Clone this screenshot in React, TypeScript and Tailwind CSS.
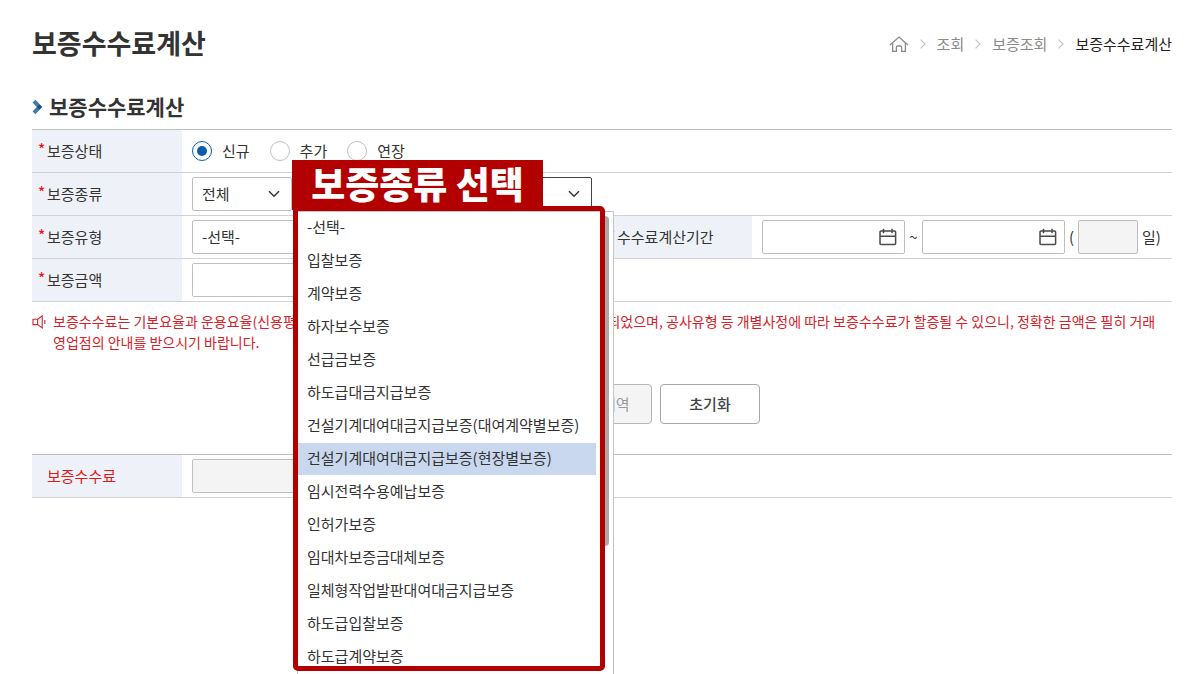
import { useState, type FC, type ReactNode } from 'react';
import { clsx } from 'clsx';

const STATUS_OPTIONS = ['신규', '추가', '연장'];

const GUARANTEE_TYPES = [
  '-선택-',
  '입찰보증',
  '계약보증',
  '하자보수보증',
  '선급금보증',
  '하도급대금지급보증',
  '건설기계대여대금지급보증(대여계약별보증)',
  '건설기계대여대금지급보증(현장별보증)',
  '임시전력수용예납보증',
  '인허가보증',
  '임대차보증금대체보증',
  '일체형작업발판대여대금지급보증',
  '하도급입찰보증',
  '하도급계약보증',
];

const fieldClass = 'h-[34px] rounded-xs border px-[9px] text-[15px] text-[#333]';
const fieldEnabled = 'border-[#bfbfbf] bg-white';
const fieldDisabled = 'border-[#bfbfbf] bg-[#f4f4f4]';

const HomeIcon: FC = () => (
  <svg width="20" height="18" viewBox="0 0 20 18" fill="none" stroke="#8a8a8a" strokeWidth="1.3" aria-hidden="true">
    <path d="M1 10 10 2l9 8" />
    <path d="M3.6 8v8.4h3.8v-4.2q0-1.2 1.2-1.2h2.8q1.2 0 1.2 1.2v4.2h3.8V8" />
  </svg>
);

const CrumbArrow: FC = () => (
  <svg width="6" height="10" viewBox="0 0 6 10" fill="none" stroke="#c4c4c4" strokeWidth="1.2" aria-hidden="true">
    <path d="m.6.6 4.4 4.4L.6 9.4" />
  </svg>
);

const TitleArrow: FC = () => (
  <svg width="10" height="16" viewBox="0 0 10 16" fill="none" aria-hidden="true">
    <path d="M2 2.2 7.4 8 2 13.8" stroke="#48789f" strokeWidth="4" />
    <path d="M7.4 5.4 10 8l-2.6 2.6L4.9 8z" fill="#144f7f" />
  </svg>
);

const SelectArrow: FC = () => (
  <svg
    className="pointer-events-none absolute right-3 top-1/2 -translate-y-1/2"
    width="12"
    height="8"
    viewBox="0 0 12 8"
    fill="none"
    stroke="#333"
    strokeWidth="1.5"
    aria-hidden="true"
  >
    <path d="m1 1.2 5 5 5-5" />
  </svg>
);

const CalendarIcon: FC = () => (
  <svg width="18" height="18" viewBox="0 0 18 18" fill="none" stroke="#4a4a4a" strokeWidth="1.5" aria-hidden="true">
    <rect x="1" y="3" width="15.6" height="13.6" rx="1" />
    <path d="M1 8.2h15.6M4.5.8v4.4M13.1.8v4.4" />
  </svg>
);

const SpeakerIcon: FC = () => (
  <svg width="14" height="14" viewBox="0 0 14 14" fill="none" stroke="#d4222a" strokeWidth="1.1" aria-hidden="true">
    <path d="M1 4.2h4.6v5.4H1zM5.6 4.2l4.6-3.3v12L5.6 9.6" />
    <path d="M12.8 5v4" />
  </svg>
);

interface FormRowProps {
  label: string;
  htmlFor?: string;
  required?: boolean;
  highlight?: boolean;
  children: ReactNode;
}

const FormRow: FC<FormRowProps> = ({ label, htmlFor, required = true, highlight, children }) => {
  const labelClass = clsx(highlight ? 'text-[#e01818]' : 'text-[#333]');
  return (
    <div className="flex h-[43px] border-b border-[#d0d2d5]">
      <div className="flex w-[150px] shrink-0 items-center bg-[#eef2f8] pl-1.5 text-[15px]">
        <span className="w-[9px] pb-1 font-medium text-[#e01818]">{required ? '*' : ''}</span>
        {htmlFor ? (
          <label htmlFor={htmlFor} className={labelClass}>
            {label}
          </label>
        ) : (
          <span className={labelClass}>{label}</span>
        )}
      </div>
      <div className="flex min-w-0 flex-1 items-center pl-2.5">{children}</div>
    </div>
  );
};

const DateField: FC<{ label: string }> = ({ label }) => (
  <div className="relative w-[143px]">
    <input type="text" aria-label={label} className={clsx(fieldClass, fieldEnabled, 'w-full')} />
    <button type="button" aria-label={`${label} 선택`} className="absolute right-2 top-2">
      <CalendarIcon />
    </button>
  </div>
);

const TypeDropdown: FC = () => {
  const [selected, setSelected] = useState(7);

  return (
    <>
      <div className="absolute left-0 top-[34px] h-[463px] w-[317px] overflow-hidden border-x border-t border-[#c4c4c4] bg-white">
        <ul role="listbox" aria-label="보증종류" className="w-[298px]">
          {GUARANTEE_TYPES.map((name, index) => (
            <li
              key={name}
              role="option"
              aria-selected={index === selected}
              onClick={() => setSelected(index)}
              className={clsx(
                'mb-px h-8 cursor-pointer pl-[9px] text-[15px] leading-[30px] whitespace-nowrap text-[#333]',
                index === selected && 'bg-[#c9d8ee]'
              )}
            >
              {name}
            </li>
          ))}
        </ul>
        <div className="absolute right-1 top-1 h-[330px] w-2 rounded-full bg-[#a9a9a9]" />
      </div>

      {/* Callout around the opened list */}
      <div className="pointer-events-none absolute -left-1 top-[29px] h-[465px] w-[312px] rounded-[5px] border-5 border-[#b20000]" />
      <div className="pointer-events-none absolute -left-[5px] -top-[17px] flex h-[50px] w-[251px] items-center justify-center bg-[#b20000] pb-1 text-[37px] leading-none font-black whitespace-nowrap text-white">
        보증종류 선택
      </div>
    </>
  );
};

const App: FC = () => {
  const [status, setStatus] = useState('신규');

  return (
    <main className="min-h-screen overflow-hidden bg-white pr-[23px] pl-8 font-['Noto_Sans_CJK_KR',sans-serif] text-[15px] text-[#333]">
      <header className="flex h-[88px] items-center justify-between">
        <h1 className="pb-0.5 text-[27px] font-bold">보증수수료계산</h1>
        <nav aria-label="현재 위치" className="flex items-center gap-[11px] text-[15px] text-[#8a8a8a]">
          <a href="#home" aria-label="홈">
            <HomeIcon />
          </a>
          <CrumbArrow />
          <a href="#inquiry">조회</a>
          <CrumbArrow />
          <a href="#guarantee">보증조회</a>
          <CrumbArrow />
          <a href="#fee" aria-current="page" className="text-[#222]">
            보증수수료계산
          </a>
        </nav>
      </header>

      <h2 className="flex h-[41px] items-center gap-[7px] pb-1 text-[21px] font-bold">
        <TitleArrow />
        보증수수료계산
      </h2>

      <form>
        <section className="border-t border-[#bfbfbf]">
          <FormRow label="보증상태">
            <div className="flex gap-5">
              {STATUS_OPTIONS.map((option) => (
                <label key={option} className="flex items-center gap-2.5">
                  <input
                    type="radio"
                    name="status"
                    checked={status === option}
                    onChange={() => setStatus(option)}
                    className="size-5 appearance-none rounded-full border border-[#bfbfbf] bg-white bg-clip-content p-1 checked:border-[#0b5cab] checked:bg-[#0b5cab]"
                  />
                  {option}
                </label>
              ))}
            </div>
          </FormRow>

          <FormRow label="보증종류" htmlFor="category">
            <div className="flex gap-[5px]">
              <div className="relative w-[100px]">
                <select id="category" className={clsx(fieldClass, fieldEnabled, 'w-full appearance-none')}>
                  <option>전체</option>
                </select>
                <SelectArrow />
              </div>
              <div className="relative z-10 w-[295px]">
                <select aria-label="보증종류 상세" className={clsx(fieldClass, 'w-full appearance-none border-[#444] bg-white')}>
                  <option value=""></option>
                </select>
                <SelectArrow />
                <TypeDropdown />
              </div>
            </div>
          </FormRow>

          <div className="grid grid-cols-2">
            <FormRow label="보증유형" htmlFor="kind">
              <div className="relative w-[200px]">
                <select id="kind" className={clsx(fieldClass, fieldEnabled, 'w-full appearance-none')}>
                  <option>-선택-</option>
                </select>
                <SelectArrow />
              </div>
            </FormRow>
            <FormRow label="수수료계산기간">
              <DateField label="시작일" />
              <span className="w-[17px] text-center">~</span>
              <DateField label="종료일" />
              <span className="w-[13px] text-center">(</span>
              <input type="text" disabled aria-label="일수" className={clsx(fieldClass, fieldDisabled, 'w-[60px]')} />
              <span className="pl-1">일)</span>
            </FormRow>
          </div>

          <FormRow label="보증금액" htmlFor="amount">
            <input id="amount" type="text" className={clsx(fieldClass, fieldEnabled, 'w-[200px]')} />
          </FormRow>
        </section>

        <div className="mt-[9px] flex gap-[7px] text-[14px] leading-[21px] break-keep text-[#d4222a]">
          <span className="pt-1">
            <SpeakerIcon />
          </span>
          <p>
            보증수수료는 기본요율과 운용요율(신용평가 할인·할증요율) 기준으로 산출한 예상금액으로 계산되었으며, 공사유형 등 개별사정에 따라 보증수수료가 할증될 수 있으니, 정확한 금액은 필히 거래
            영업점의 안내를 받으시기 바랍니다.
          </p>
        </div>

        <div className="mt-[31px] flex justify-center gap-2 text-[15px]">
          <button type="button" className="h-10 w-[100px] rounded-[4px] border border-[#0b5cab] bg-[#0b5cab] text-white">
            계산하기
          </button>
          <button type="button" disabled className="h-10 w-[100px] rounded-[4px] border border-[#b4b6ba] bg-[#f4f4f4] text-[#999]">
            산출내역
          </button>
          <button type="reset" className="h-10 w-[100px] rounded-[4px] border border-[#a4a7ae] bg-white font-medium text-[#444]">
            초기화
          </button>
        </div>

        <section className="mt-[30px] border-t border-[#bfbfbf]">
          <FormRow label="보증수수료" htmlFor="fee" required={false} highlight>
            <input id="fee" type="text" disabled className={clsx(fieldClass, fieldDisabled, 'w-[200px]')} />
          </FormRow>
        </section>
      </form>
    </main>
  );
};

export default App;
